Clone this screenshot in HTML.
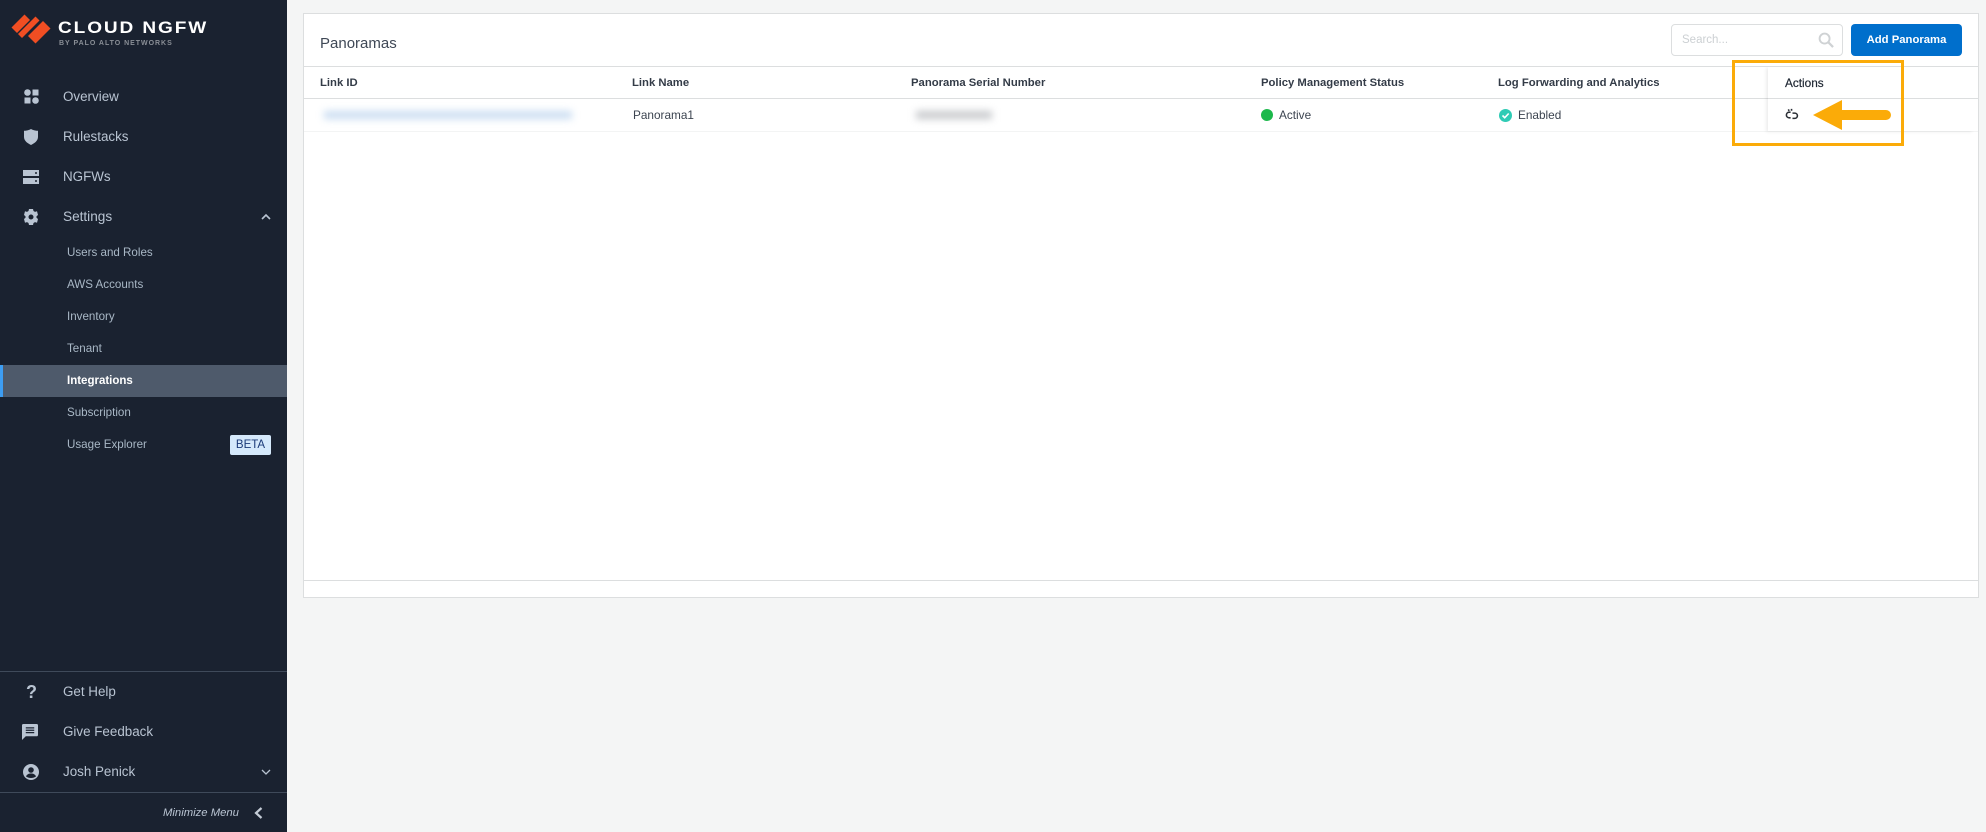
<!DOCTYPE html>
<html><head><meta charset="utf-8"><style>
html,body{margin:0;padding:0}
body{width:1986px;height:832px;position:relative;overflow:hidden;background:#f4f5f5;font-family:"Liberation Sans",sans-serif}
.t{position:absolute;white-space:nowrap;line-height:16px;height:16px}
.abs{position:absolute}
#side{position:absolute;left:0;top:0;width:287px;height:832px;background:#1a2230}
.m{font-size:13.4px;color:#b9c4d2;left:63px}
.s{font-size:11.6px;color:#a9b8c6;left:67px}
.h{font-size:11.3px;font-weight:bold;color:#333b47}
.c{font-size:11.8px;color:#3c4450}
svg{position:absolute;overflow:visible}
</style></head><body>
<div id="side">
<svg style="left:0;top:0" width="60" height="50" viewBox="0 0 60 50"><g fill="#f04e23"><polygon points="11.500,27.500 24.500,14.500 30,20 17,33"/><polygon points="18,34 35.500,16.500 39.500,20.500 22,38"/><polygon points="28,36 43,21 50.500,28.500 35.500,43.500"/></g></svg>
<div class="t" style="left:58px;top:19px;font-size:17px;font-weight:bold;color:#fff;letter-spacing:1.7px;line-height:18px;height:18px;transform:scaleX(1.12);transform-origin:left top">CLOUD NGFW</div>
<div class="t" style="left:59px;top:39px;font-size:7px;font-weight:bold;color:#8a8f96;letter-spacing:.97px;line-height:10px;height:10px">BY PALO ALTO NETWORKS</div>

<svg style="left:24px;top:89px" width="15" height="15" viewBox="0 0 15 15" fill="#b9c4d2"><circle cx="3.500" cy="3.500" r="3.300"/><rect x="8.500" y=".5" width="6" height="6"/><rect x=".5" y="8.500" width="6" height="6"/><circle cx="11.500" cy="11.500" r="3.300"/></svg>
<div class="t m" style="top:89px">Overview</div>
<svg style="left:24px;top:129px" width="14" height="16" viewBox="0 0 14 16" fill="#b9c4d2"><path d="M0 1.800C4 1.800 7 0 7 0s3 1.800 7 1.800V8c0 4-4 6.500-7 8C4 14.500 0 12 0 8z"/></svg>
<div class="t m" style="top:129px">Rulestacks</div>
<svg style="left:23px;top:170px" width="16" height="14" viewBox="0 0 16 14" fill="#b9c4d2"><path d="M0 0h16v6H0zM12 2.200v1.600h2V2.200zM0 8h16v6H0zM12 10.200v1.600h2v-1.600z" fill-rule="evenodd"/></svg>
<div class="t m" style="top:169px">NGFWs</div>
<svg style="left:24px;top:209px" width="14" height="16" viewBox="0 0 14 16" fill="#b9c4d2"><path fill-rule="evenodd" d="M5 0h4l.5 2 1.500.9 2-.6 1 3.700-1.500 1.200v1.600L14 10l-1 3.700-2-.6-1.500.9L9 16H5l-.5-2-1.500-.9-2 .6L0 10l1.500-1.200V7.200L0 6l1-3.700 2 .6L4.500 2zM7 5.500a2.500 2.500 0 100 5 2.500 2.500 0 000-5z"/></svg>
<div class="t m" style="top:209px;font-size:13.6px">Settings</div>
<svg style="left:261px;top:214px" width="10" height="6" viewBox="0 0 10 6"><path d="M1 5l4-4 4 4" fill="none" stroke="#b9c4d2" stroke-width="1.600"/></svg>

<div class="t s" style="top:245px">Users and Roles</div>
<div class="t s" style="top:277px">AWS Accounts</div>
<div class="t s" style="top:309px">Inventory</div>
<div class="t s" style="top:341px">Tenant</div>
<div class="abs" style="left:0;top:365px;width:287px;height:32px;background:#4e5a6b"></div>
<div class="abs" style="left:0;top:365px;width:3px;height:32px;background:#3d9df2"></div>
<div class="t s" style="top:373px;color:#fff;font-weight:bold;font-size:11.500px">Integrations</div>
<div class="t s" style="top:405px">Subscription</div>
<div class="t s" style="top:437px">Usage Explorer</div>
<div class="abs" style="left:230px;top:435px;width:41px;height:20px;background:#d5e9fb;border-radius:2px;color:#1b3a78;font-size:11.500px;line-height:21px;text-align:center">BETA</div>

<div class="abs" style="left:0;top:671px;width:287px;height:1px;background:#3f4a5a"></div>
<div class="t" style="left:26px;top:682px;font-size:18px;line-height:20px;height:20px;font-weight:bold;color:#b9c4d2">?</div>
<div class="t m" style="top:684px">Get Help</div>
<svg style="left:22px;top:724px" width="16" height="16" viewBox="0 0 17 17"><path fill-rule="evenodd" fill="#b9c4d2" d="M1.500 0h14A1.500 1.500 0 0117 1.500v10a1.500 1.500 0 01-1.500 1.500H4L0 17V1.500A1.500 1.500 0 011.500 0zM4 3.500v1.300h9V3.500zM4 6v1.300h9V6zM4 8.500v1.300h9V8.500z"/></svg>
<div class="t m" style="top:724px">Give Feedback</div>
<svg style="left:23px;top:764px" width="16" height="16" viewBox="0 0 16 16"><circle cx="8" cy="8" r="8" fill="#b9c4d2"/><circle cx="8" cy="6" r="2.800" fill="#1a2230"/><path d="M3 12.500c1-2.500 3-3 5-3s4 .5 5 3c-1.500 1-3 1.500-5 1.500s-3.500-.5-5-1.500z" fill="#1a2230"/></svg>
<div class="t m" style="top:764px">Josh Penick</div>
<svg style="left:261px;top:769px" width="10" height="6" viewBox="0 0 10 6"><path d="M1 1l4 4 4-4" fill="none" stroke="#b9c4d2" stroke-width="1.300"/></svg>
<div class="abs" style="left:0;top:792px;width:287px;height:1px;background:#3f4a5a"></div>
<div class="t" style="left:163px;top:805px;font-size:11.300px;font-style:italic;color:#b9c4d2">Minimize Menu</div>
<svg style="left:254px;top:807px" width="9" height="12" viewBox="0 0 9 12"><path d="M7.500 1L2 6l5.500 5" fill="none" stroke="#c4ccd6" stroke-width="2.200"/></svg>
</div>

<div class="abs" style="left:303px;top:13px;width:1674px;height:583px;background:#fff;border:1px solid #dcdedf"></div>
<div class="abs" style="left:304px;top:66px;width:1674px;height:1px;background:#dcdedf"></div>
<div class="abs" style="left:304px;top:98px;width:1674px;height:1px;background:#dcdedf"></div>
<div class="abs" style="left:304px;top:580px;width:1674px;height:1px;background:#dcdedf"></div>
<div class="abs" style="left:304px;top:131px;width:1674px;height:1px;background:#f3f4f4"></div>

<div class="t" style="left:320px;top:35px;font-size:15px;line-height:18px;height:18px;color:#3f4856">Panoramas</div>

<div class="abs" style="left:1671px;top:24px;width:170px;height:30px;border:1px solid #dcdedf;border-radius:4px;background:#fff"></div>
<div class="t" style="left:1682px;top:32px;font-size:11.500px;color:#ccd0d3">Search...</div>
<svg style="left:1818px;top:32px" width="16" height="16" viewBox="0 0 17 17"><circle cx="7" cy="7" r="5.300" fill="none" stroke="#cfd2d4" stroke-width="2"/><path d="M11 11l5 5" stroke="#cfd2d4" stroke-width="2.400"/></svg>
<div class="abs" style="left:1851px;top:24px;width:111px;height:32px;background:#006fcc;border-radius:4px;color:#fff;font-size:11.300px;font-weight:bold;line-height:33px;text-align:center">Add Panorama</div>

<div class="t h" style="left:320px;top:75px">Link ID</div>
<div class="t h" style="left:632px;top:75px">Link Name</div>
<div class="t h" style="left:911px;top:75px">Panorama Serial Number</div>
<div class="t h" style="left:1261px;top:75px">Policy Management Status</div>
<div class="t h" style="left:1498px;top:75px">Log Forwarding and Analytics</div>

<div class="abs" style="left:324px;top:111px;width:248px;height:8px;background:#bcd4ee;filter:blur(4px);opacity:.8"></div>
<div class="t c" style="left:633px;top:107px">Panorama1</div>
<div class="abs" style="left:916px;top:111px;width:76px;height:8px;background:#c6c8cb;filter:blur(4px)"></div>
<div class="abs" style="left:1261px;top:109px;width:12px;height:12px;border-radius:50%;background:#1cb84b"></div>
<div class="t c" style="left:1279px;top:107px">Active</div>
<svg style="left:1499px;top:109px" width="13" height="13" viewBox="0 0 13 13"><circle cx="6.500" cy="6.500" r="6.500" fill="#2fcbb5"/><path d="M3.500 6.500l2.200 2.200 4-4.200" fill="none" stroke="#fff" stroke-width="1.600"/></svg>
<div class="t c" style="left:1518px;top:107px">Enabled</div>

<div class="abs" style="left:1768px;top:67px;width:206px;height:64px;box-shadow:-2px 1px 3px rgba(0,0,0,.07);clip-path:inset(0 0 -6px -6px)"></div>
<div class="t h" style="left:1785px;top:75px;font-size:11.800px;font-weight:normal;color:#1f2733;-webkit-text-stroke:.2px #1f2733">Actions</div>
<svg style="left:1785px;top:108px" width="14" height="14" viewBox="0 0 15 14"><g fill="none" stroke="#2b2f36" stroke-width="1.700"><path d="M6 4H4.500a3 3 0 000 6H6"/><path d="M8 5h2.500a2.800 2.800 0 010 5.600H8"/><path d="M3.500 1l1 1.500M7 .5v2"/></g></svg>

<div class="abs" style="left:1732px;top:60px;width:166px;height:80px;border:3px solid #fbab08"></div>
<svg style="left:1812px;top:99px" width="80" height="32" viewBox="0 0 80 32"><path d="M1 16L30 1v10h44a5 5 0 010 10H30v10z" fill="#fbab08"/></svg>
</body></html>
